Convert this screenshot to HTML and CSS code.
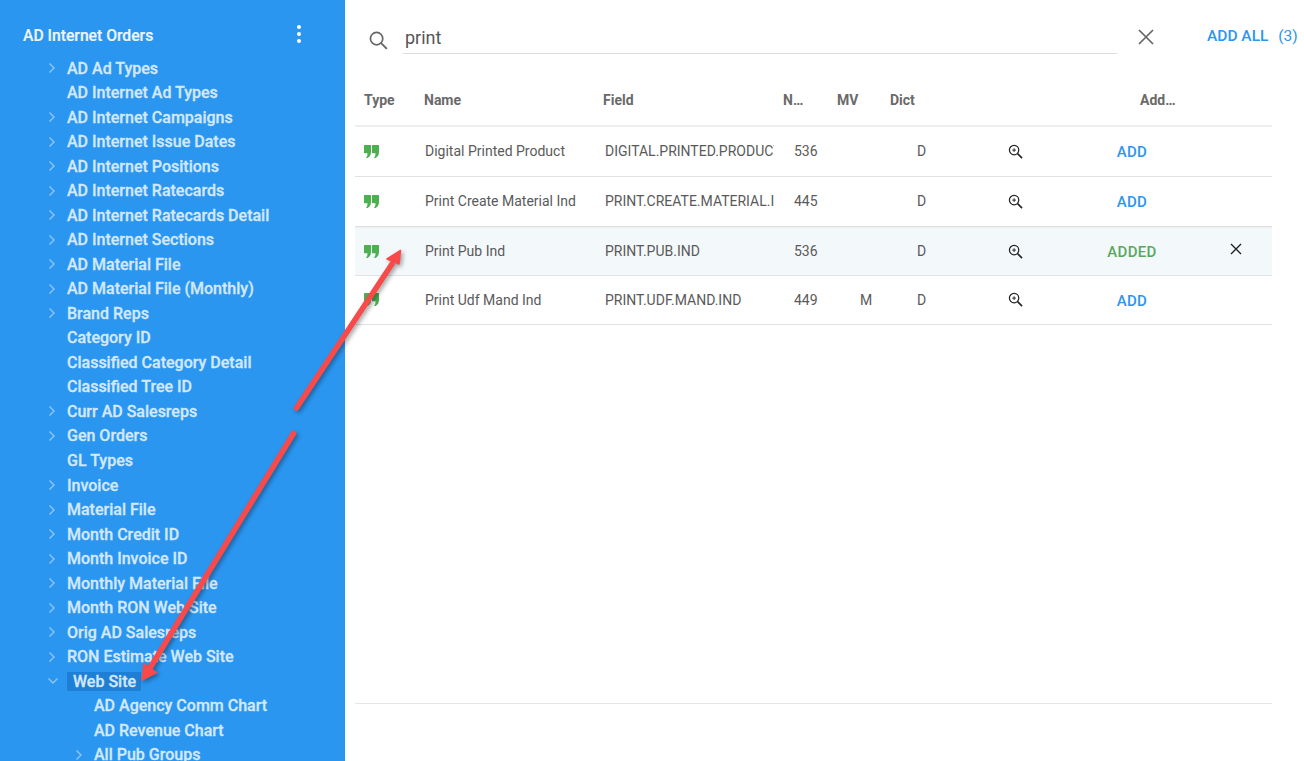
FILE: index.html
```html
<!doctype html>
<html lang="en">
  <head>
    <meta charset="utf-8">
    <meta name="viewport" content="width=device-width, initial-scale=1" />
    <title>AD Internet Orders</title>
    <link rel="stylesheet" href="styles.css">
  </head>
  <body>
    <svg width="0" height="0" class="defs">
      <symbol id="chev-right" viewBox="0 0 10 12"><path d="M2.500 1.500 7 6l-4.500 4.500" fill="none" stroke="currentColor" stroke-width="1.400"/></symbol>
      <symbol id="chev-down" viewBox="0 0 12 10"><path d="M1.500 2.500 6 7l4.500-4.500" fill="none" stroke="currentColor" stroke-width="1.400"/></symbol>
      <symbol id="quote" viewBox="0 0 15 13"><path d="M.6 0h5.800a.6.6 0 0 1 .6.6V7c0 2.800-1.300 4.900-3.500 6H2c1-1.200 1.500-2.600 1.500-4.800H.6A.6.6 0 0 1 0 7.600V.6A.6.6 0 0 1 .6 0zM8.600 0h5.800a.6.6 0 0 1 .6.6V7c0 2.800-1.300 4.900-3.500 6H10c1-1.200 1.500-2.600 1.500-4.800H8.600a.6.6 0 0 1-.6-.6V.6a.6.6 0 0 1 .6-.6z" fill="currentColor"/></symbol>
      <symbol id="zoom" viewBox="0 0 16 16"><circle cx="6.500" cy="6.500" r="5" fill="none" stroke="currentColor" stroke-width="1.300"/><path d="m10.200 10.200 4.800 4.800" stroke="currentColor" stroke-width="1.700"/><path d="M4.500 6.500h4M6.500 4.500v4" stroke="currentColor" stroke-width="1"/></symbol>
    </svg>

    <div class="app">
      <aside class="sidebar">
        <div class="sidebar-head">
          <span class="sidebar-title">AD Internet Orders</span>
          <span class="kebab"><i></i><i></i><i></i></span>
        </div>
        <ul class="tree">
          <li class="node"><svg class="chev"><use href="#chev-right"/></svg><span>AD Ad Types</span></li>
          <li class="node leaf"><span>AD Internet Ad Types</span></li>
          <li class="node"><svg class="chev"><use href="#chev-right"/></svg><span>AD Internet Campaigns</span></li>
          <li class="node"><svg class="chev"><use href="#chev-right"/></svg><span>AD Internet Issue Dates</span></li>
          <li class="node"><svg class="chev"><use href="#chev-right"/></svg><span>AD Internet Positions</span></li>
          <li class="node"><svg class="chev"><use href="#chev-right"/></svg><span>AD Internet Ratecards</span></li>
          <li class="node"><svg class="chev"><use href="#chev-right"/></svg><span>AD Internet Ratecards Detail</span></li>
          <li class="node"><svg class="chev"><use href="#chev-right"/></svg><span>AD Internet Sections</span></li>
          <li class="node"><svg class="chev"><use href="#chev-right"/></svg><span>AD Material File</span></li>
          <li class="node"><svg class="chev"><use href="#chev-right"/></svg><span>AD Material File (Monthly)</span></li>
          <li class="node"><svg class="chev"><use href="#chev-right"/></svg><span>Brand Reps</span></li>
          <li class="node leaf"><span>Category ID</span></li>
          <li class="node leaf"><span>Classified Category Detail</span></li>
          <li class="node leaf"><span>Classified Tree ID</span></li>
          <li class="node"><svg class="chev"><use href="#chev-right"/></svg><span>Curr AD Salesreps</span></li>
          <li class="node"><svg class="chev"><use href="#chev-right"/></svg><span>Gen Orders</span></li>
          <li class="node leaf"><span>GL Types</span></li>
          <li class="node"><svg class="chev"><use href="#chev-right"/></svg><span>Invoice</span></li>
          <li class="node"><svg class="chev"><use href="#chev-right"/></svg><span>Material File</span></li>
          <li class="node"><svg class="chev"><use href="#chev-right"/></svg><span>Month Credit ID</span></li>
          <li class="node"><svg class="chev"><use href="#chev-right"/></svg><span>Month Invoice ID</span></li>
          <li class="node"><svg class="chev"><use href="#chev-right"/></svg><span>Monthly Material File</span></li>
          <li class="node"><svg class="chev"><use href="#chev-right"/></svg><span>Month RON Web Site</span></li>
          <li class="node"><svg class="chev"><use href="#chev-right"/></svg><span>Orig AD Salesreps</span></li>
          <li class="node"><svg class="chev"><use href="#chev-right"/></svg><span>RON Estimate Web Site</span></li>
          <li class="node selected"><svg class="chev"><use href="#chev-down"/></svg><span>Web Site</span></li>
          <li class="node leaf child"><span>AD Agency Comm Chart</span></li>
          <li class="node leaf child"><span>AD Revenue Chart</span></li>
          <li class="node child"><svg class="chev"><use href="#chev-right"/></svg><span>All Pub Groups</span></li>
        </ul>
      </aside>

      <main class="content">
        <div class="search">
          <svg class="search-icon" viewBox="0 0 20 20"><circle cx="8" cy="8" r="6.500" fill="none" stroke="currentColor" stroke-width="1.800"/><path d="m12.800 12.800 6 6" stroke="currentColor" stroke-width="2"/></svg>
          <div class="search-input">print</div>
          <svg class="search-clear" viewBox="0 0 16 16"><path d="m1 1 14 14M15 1 1 15" stroke="currentColor" stroke-width="1.700"/></svg>
          <div class="add-all">ADD ALL <span class="count">(3)</span></div>
        </div>

        <div class="results">
          <div class="row head">
            <div>Type</div>
            <div>Name</div>
            <div>Field</div>
            <div>N…</div>
            <div>MV</div>
            <div>Dict</div>
            <div></div>
            <div class="add-head">Add…</div>
            <div></div>
          </div>
          <div class="row">
            <svg class="q"><use href="#quote"/></svg>
            <div class="name">Digital Printed Product</div>
            <div class="field"><span>DIGITAL.PRINTED.PRODUCT</span></div>
            <div class="num">536</div>
            <div class="mv"></div>
            <div class="dict">D</div>
            <svg class="z"><use href="#zoom"/></svg>
            <div class="add">ADD</div>
            <div></div>
          </div>
          <div class="row">
            <svg class="q"><use href="#quote"/></svg>
            <div class="name">Print Create Material Ind</div>
            <div class="field"><span>PRINT.CREATE.MATERIAL.IND</span></div>
            <div class="num">445</div>
            <div class="mv"></div>
            <div class="dict">D</div>
            <svg class="z"><use href="#zoom"/></svg>
            <div class="add">ADD</div>
            <div></div>
          </div>
          <div class="row picked">
            <svg class="q"><use href="#quote"/></svg>
            <div class="name">Print Pub Ind</div>
            <div class="field"><span>PRINT.PUB.IND</span></div>
            <div class="num">536</div>
            <div class="mv"></div>
            <div class="dict">D</div>
            <svg class="z"><use href="#zoom"/></svg>
            <div class="add added">ADDED</div>
            <svg class="remove" viewBox="0 0 12 12"><path d="m1 1 10 10M11 1 1 11" stroke="currentColor" stroke-width="1.400"/></svg>
          </div>
          <div class="row short">
            <svg class="q"><use href="#quote"/></svg>
            <div class="name">Print Udf Mand Ind</div>
            <div class="field"><span>PRINT.UDF.MAND.IND</span></div>
            <div class="num">449</div>
            <div class="mv">M</div>
            <div class="dict">D</div>
            <svg class="z"><use href="#zoom"/></svg>
            <div class="add">ADD</div>
            <div></div>
          </div>
        </div>
      </main>
    </div>

    <!-- callout arrows drawn over the page -->
    <svg class="arrows" viewBox="0 0 1304 761">
      <g class="arrow">
        <path d="M296.500 408 392 264" stroke-width="5.500" stroke-linecap="round"/>
        <path d="M400.500 250.500 387 259 399 264z" stroke-width="1.500" stroke-linejoin="round"/>
        <path d="M293.500 433.500 150 668" stroke-width="5.500" stroke-linecap="round"/>
        <path d="M142 680 144 664 156.500 672.500z" stroke-width="1.500" stroke-linejoin="round"/>
      </g>
    </svg>
  </body>
</html>
```

FILE: styles.css
```css
*, *::before, *::after {
    box-sizing: border-box;
}

html,
body {
    height: 100%;
    margin: 0;
    overflow: hidden;
}

body {
    position: relative;
    font-family: Roboto, "Liberation Sans", sans-serif;
    font-size: 14px;
    color: #5a5a5a;
    background: #fff;
}

.defs {
    display: block;
    height: 0;
}

.app {
    display: flex;
    height: 761px;
}

/* left tree */

.sidebar {
    flex: 0 0 345px;
    overflow: hidden;
    background: #2b96f0;
    color: #d3e8fc;
}

.sidebar-head {
    display: flex;
    align-items: center;
    justify-content: space-between;
    height: 56px;
    padding: 14px 44px 0 23px;
}

.sidebar-title {
    font-size: 15.700px;
    font-weight: 500;
    color: #ecf5fe;
    -webkit-text-stroke: .2px;
}

.kebab {
    display: flex;
    flex-direction: column;
    gap: 2.500px;
    margin-top: -2px;
}

.kebab i {
    width: 4.500px;
    height: 4.500px;
    border-radius: 50%;
    background: #fff;
}

.tree {
    margin: 0;
    padding: 0;
    list-style: none;
}

.node {
    display: flex;
    align-items: center;
    height: 24.530px;
    padding-left: 47px;
    font-size: 16px;
    font-weight: 500;
    white-space: nowrap;
    -webkit-text-stroke: .3px;
}

.node.leaf {
    padding-left: 67px;
}

.node.child {
    padding-left: 74px;
}

.node.leaf.child {
    padding-left: 94px;
}

.chev {
    flex: 0 0 10px;
    width: 10px;
    height: 12px;
    margin-right: 10px;
    color: #8fc6f6;
}

.selected .chev {
    flex-basis: 12px;
    width: 12px;
    margin-right: 8px;
}

.selected span {
    padding: 0 5px 0 6px;
    line-height: 19px;
    background: #1f7fd4;
}

/* search bar */

.content {
    flex: 1;
    padding-left: 10px;
    padding-right: 32px;
}

.search {
    display: flex;
    align-items: flex-start;
    height: 76px;
    padding: 17px 0 0 14px;
}

.search-icon {
    flex: none;
    width: 19px;
    height: 19px;
    margin-top: 14px;
    color: #666;
}

.search-input {
    flex: none;
    width: 714px;
    height: 37px;
    margin-left: 15px;
    padding: 7px 0 0 2px;
    border-bottom: 1px solid #dcdcdc;
    font-size: 18px;
    line-height: 27px;
    color: #555;
}

.search-clear {
    flex: none;
    width: 16px;
    height: 16px;
    margin: 12px 0 0 21px;
    color: #666;
}

.add-all {
    flex: none;
    margin: 10px -32px 0 0;
    padding-left: 53px;
    font-size: 15.500px;
    font-weight: 500;
    line-height: 18px;
    white-space: nowrap;
    color: #2b96f0;
}

.count {
    margin-left: 6px;
    font-weight: 400;
}

/* results table */

.results {
    height: 628px;
    border-bottom: 1px solid #e6e6e6;
}

.row {
    display: grid;
    grid-template-columns: 69px 179px 180px 54px 53px 100px 50px 184px 23px;
    align-items: center;
    height: 50px;
    padding-bottom: 1px;
    border-bottom: 1px solid #e2e2e2;
}

.row.short {
    height: 49px;
    padding-bottom: 1px;
}

.row.picked {
    height: 49px;
    padding-bottom: 0;
    background: #f3f8fb;
    box-shadow: inset 0 1px 0 #eee;
}

.row.head {
    height: 51px;
    padding-bottom: 2px;
    border-bottom: 2px solid #eee;
    font-weight: 700;
    color: #6a6a6a;
}

.head > div:first-child {
    padding-left: 9px;
}

.add-head {
    padding-left: 100px;
}

.q {
    width: 15px;
    height: 13px;
    margin-left: 9px;
    color: #4caf50;
}

.name {
    padding-left: 1px;
    white-space: nowrap;
}

.field {
    overflow: hidden;
    width: 171px;
    padding-left: 2px;
    white-space: nowrap;
}

.num {
    padding-left: 11px;
}

.mv {
    padding-left: 23px;
}

.dict {
    padding-left: 27px;
}

.z {
    justify-self: center;
    width: 15px;
    height: 15px;
    color: #222;
}

.add {
    justify-self: center;
    margin-top: 2px;
    font-size: 15px;
    font-weight: 500;
    letter-spacing: .3px;
    color: #2b96f0;
}

.add.added {
    color: #5aa85f;
}

.remove {
    justify-self: center;
    width: 12px;
    height: 12px;
    margin-top: -5px;
    color: #222;
}

/* callouts */

.arrows {
    position: absolute;
    top: 0;
    left: 0;
    width: 1304px;
    height: 761px;
    pointer-events: none;
    filter: drop-shadow(2px 2px 2px rgba(0, 0, 0, .35));
}

.arrow {
    fill: #f84a4a;
    stroke: #f84a4a;
}
```
